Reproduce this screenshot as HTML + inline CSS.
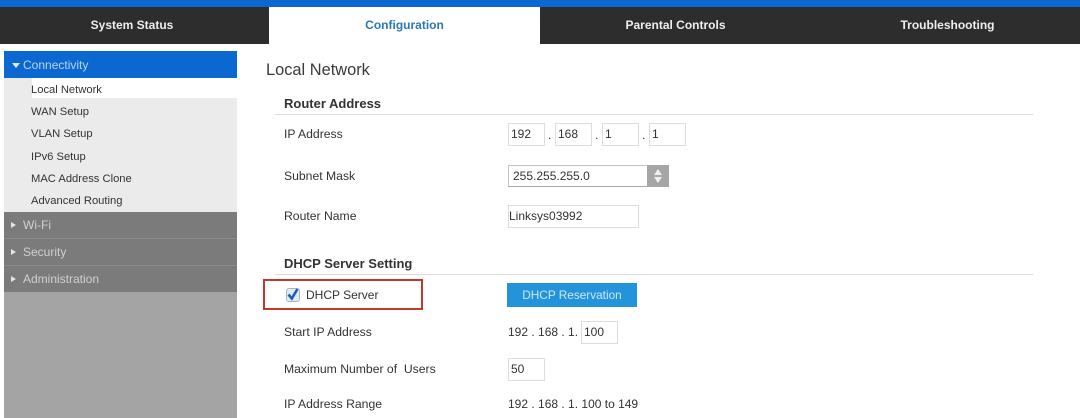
<!DOCTYPE html>
<html><head><meta charset="utf-8">
<style>
html,body{margin:0;padding:0;width:1080px;height:418px;overflow:hidden;background:#fff;font-family:"Liberation Sans",sans-serif;color:#333}
div{position:absolute;box-sizing:border-box}
.t{white-space:nowrap;line-height:16px}
.tab{top:7px;height:37px;line-height:36px;text-align:center;font-size:12px;font-weight:bold;color:#eee}
.sub{left:31px;font-size:11.2px;color:#333;white-space:nowrap;line-height:16px}
.gr{left:4px;width:233px;background:#7b7b7b}
.gt{left:23px;font-size:12px;color:#d0d0d0;white-space:nowrap;line-height:16px}
.lab{left:284px;font-size:12.2px;color:#333;white-space:nowrap;line-height:16px}
.inp{height:23px;background:#fff;border:1px solid #dcdcdc;font-size:12px;line-height:21px;padding-left:2px;color:#333;white-space:nowrap}
.h{left:284px;font-size:13px;font-weight:bold;color:#333;white-space:nowrap;line-height:16px}
.ln{left:275px;width:758px;height:1px;background:#dcdcdc}
.tri{width:0;height:0;border-top:3px solid transparent;border-bottom:3px solid transparent;border-left:5px solid #e4e4e4;left:11px}
</style></head><body>
<div style="left:0;top:0;width:1080px;height:7px;background:#0a68d0"></div>
<div style="left:0;top:7px;width:1080px;height:37px;background:#2d2d2d"></div>
<div class="tab" style="left:0;width:264px">System Status</div>
<div class="tab" style="left:269px;width:271px;background:#fff;color:#2a78b4">Configuration</div>
<div class="tab" style="left:540px;width:271px">Parental Controls</div>
<div class="tab" style="left:812px;width:271px">Troubleshooting</div>

<div style="left:4px;top:51px;width:233px;height:27px;background:#0a68d0"></div>
<div style="left:12px;top:63px;width:0;height:0;border-left:4px solid transparent;border-right:4px solid transparent;border-top:5px solid #e4eefa"></div>
<div class="t" style="left:23px;top:57px;font-size:12px;color:#b9d6f5">Connectivity</div>
<div style="left:4px;top:78px;width:233px;height:134px;background:#ebebeb"></div>
<div style="left:32px;top:78px;width:205px;height:20px;background:#fff"></div>
<div class="sub" style="top:82px">Local Network</div>
<div class="sub" style="top:104px">WAN Setup</div>
<div class="sub" style="top:126px">VLAN Setup</div>
<div class="sub" style="top:149px">IPv6 Setup</div>
<div class="sub" style="top:171px">MAC Address Clone</div>
<div class="sub" style="top:193px">Advanced Routing</div>
<div class="gr" style="top:212px;height:80px"></div>
<div style="left:4px;top:238px;width:233px;height:1px;background:#8a8a8a"></div>
<div style="left:4px;top:265px;width:233px;height:1px;background:#8a8a8a"></div>
<div class="tri" style="top:222px"></div>
<div class="tri" style="top:249px"></div>
<div class="tri" style="top:276px"></div>
<div class="gt" style="top:217px">Wi-Fi</div>
<div class="gt" style="top:244px">Security</div>
<div class="gt" style="top:271px">Administration</div>
<div style="left:4px;top:292px;width:233px;height:126px;background:#a4a4a4"></div>

<div class="t" style="left:266px;top:61px;font-size:16.4px;line-height:18px;color:#3a3a3a">Local Network</div>
<div class="h" style="top:96px">Router Address</div>
<div class="ln" style="top:114px"></div>
<div class="lab" style="top:126px">IP Address</div>
<div class="inp" style="left:508px;top:123px;width:37px">192</div>
<div class="t" style="left:548px;top:127px;font-size:12px">.</div>
<div class="inp" style="left:555px;top:123px;width:37px">168</div>
<div class="t" style="left:595px;top:127px;font-size:12px">.</div>
<div class="inp" style="left:602px;top:123px;width:37px">1</div>
<div class="t" style="left:642px;top:127px;font-size:12px">.</div>
<div class="inp" style="left:649px;top:123px;width:37px">1</div>

<div class="lab" style="top:168px">Subnet Mask</div>
<div style="left:508px;top:165px;width:161px;height:22px;background:#fff;border:1px solid #c4c4c4;border-bottom-color:#a8a8a8;font-size:12px;line-height:20px;padding-left:4px;color:#333">255.255.255.0</div>
<div style="left:647px;top:165px;width:22px;height:22px;background:#a6a6a6"></div>
<div style="left:654px;top:169px;width:0;height:0;border-left:4px solid transparent;border-right:4px solid transparent;border-bottom:6px solid #f0f0f0"></div>
<div style="left:654px;top:177px;width:0;height:0;border-left:4px solid transparent;border-right:4px solid transparent;border-top:6px solid #f0f0f0"></div>

<div class="lab" style="top:208px">Router Name</div>
<div class="inp" style="left:508px;top:205px;width:131px;padding-left:0">Linksys03992</div>

<div class="h" style="top:256px">DHCP Server Setting</div>
<div class="ln" style="top:274px"></div>

<div style="left:263px;top:279px;width:160px;height:31px;border:2px solid #c0392b"></div>
<div style="left:286px;top:288px;width:14px;height:14px;background:#e4eaf2;border:1px solid #a9b6c8;border-radius:3px"></div>
<svg style="position:absolute;left:285px;top:286px" width="16" height="16" viewBox="0 0 16 16"><path d="M3.5 8.5 L6.8 12.5 L12.5 3" fill="none" stroke="#1a5fc0" stroke-width="2.6"/></svg>
<div class="t" style="left:306px;top:287px;font-size:12px;color:#333">DHCP Server</div>
<div style="left:507px;top:283px;width:130px;height:24px;background:#2394dc;color:#cfe7f6;font-size:11.8px;line-height:25px;text-align:center">DHCP Reservation</div>

<div class="lab" style="top:324px">Start IP Address</div>
<div class="t" style="left:508px;top:324px;font-size:12px">192 . 168 . 1.</div>
<div class="inp" style="left:581px;top:321px;width:37px">100</div>
<div class="lab" style="top:361px">Maximum Number of&nbsp; Users</div>
<div class="inp" style="left:508px;top:358px;width:37px">50</div>
<div class="lab" style="top:396px">IP Address Range</div>
<div class="t" style="left:508px;top:396px;font-size:12px">192 . 168 . 1. 100 to 149</div>
</body></html>
